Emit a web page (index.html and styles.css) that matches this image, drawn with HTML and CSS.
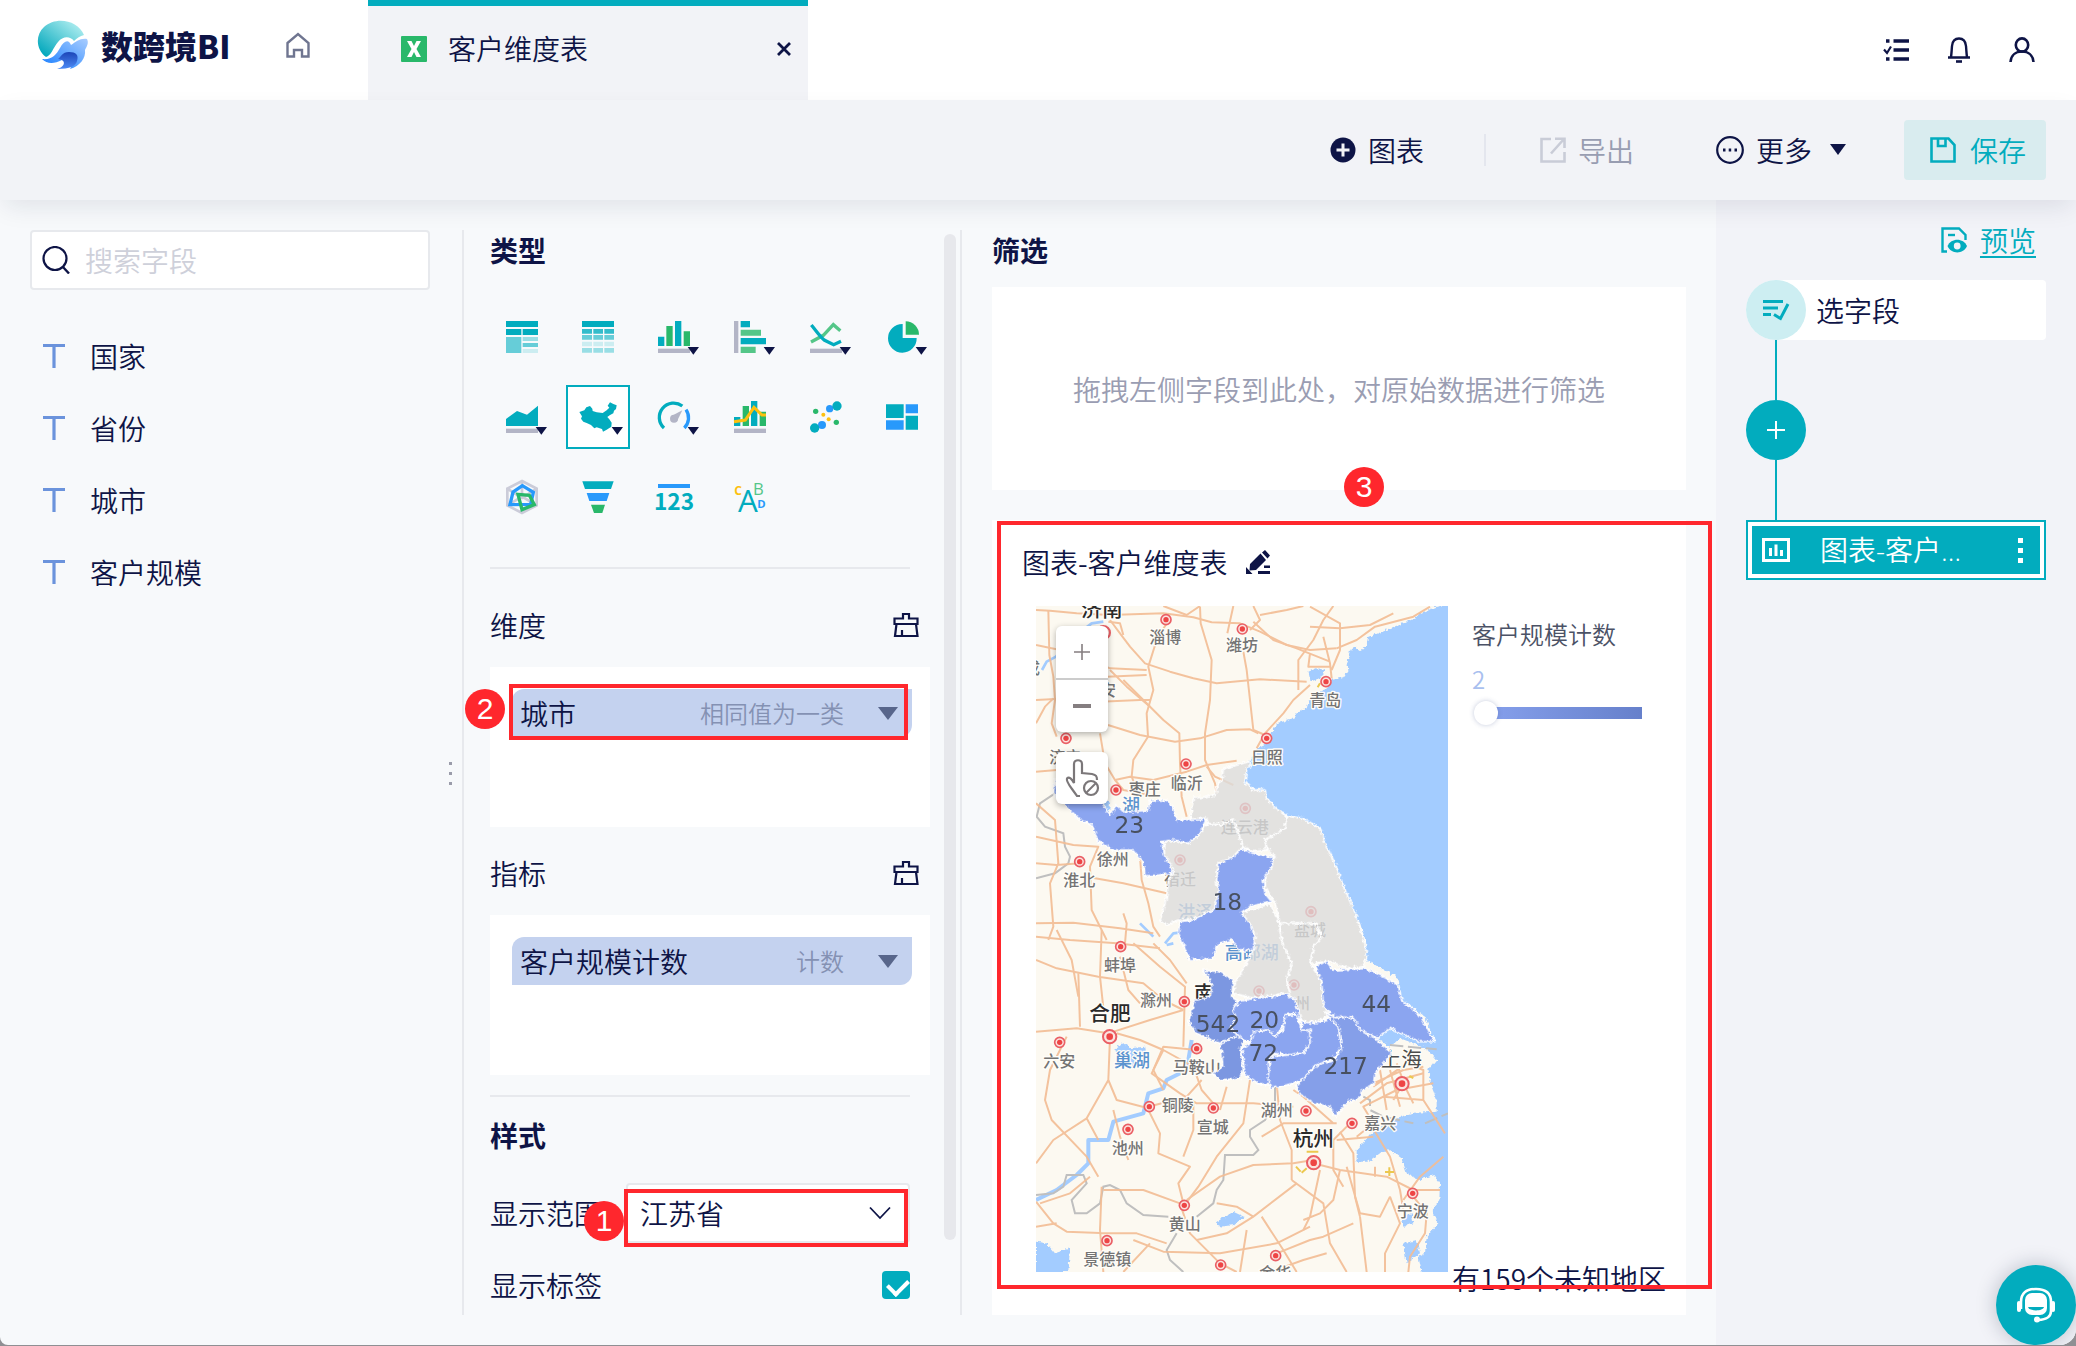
FILE: index.html
```html
<!DOCTYPE html>
<html lang="zh-CN">
<head>
<meta charset="utf-8">
<meta name="viewport" content="width=device-width, initial-scale=1">
<title>客户维度表 - 数跨境BI</title>
<link rel="stylesheet" href="styles.css">
</head>
<body>
<div class="app">
  <header class="topbar">
    <div class="brand">
      <svg class="logo" viewBox="37 20 52 50" aria-hidden="true">
        <defs>
          <linearGradient id="ball" x1="0" y1="1" x2="1" y2="0"><stop offset="0.1" stop-color="#05a9bd"/><stop offset="1" stop-color="#c4f6f6"/></linearGradient>
          <linearGradient id="wave" x1="0" y1="1" x2="1" y2="0"><stop offset="0.1" stop-color="#2384ff"/><stop offset="1" stop-color="#a9cdff"/></linearGradient>
          <linearGradient id="deep" x1="0" y1="0" x2="0" y2="1"><stop offset="0" stop-color="#1c45b8"/><stop offset="1" stop-color="#4d8bf5"/></linearGradient>
        </defs>
        <path d="M46 57C36 50 35 35 44 27C56 16 78 20 84 35C80 36 77 38 74 41C70 36 63 36 58 42C53 48 51 56 46 57Z" fill="url(#ball)"/>
        <path d="M42 59C52 60 56 55 60 48C64 40 69 39 71 45C76 42 80 38 87 39C89 43 87 46 85 50C86 58 80 66 70 69C75 62 70 56 62 60C54 64 47 64 42 59Z" fill="url(#wave)"/>
        <path d="M58 59C61 57 62 52 69 52C76 52 79 55 77 61C76 66 70 69 57 69C65 67 67 60 58 59Z" fill="url(#deep)"/>
      </svg>
      <span class="brand-name">数跨境BI</span>
      <a class="home" href="#" aria-label="首页"><svg viewBox="0 0 26 26"><path d="M2.500 11L13 2L23.500 11V24.500H17V18H9V24.500H2.500Z" fill="none" stroke="#6f7590" stroke-width="2.400"/></svg></a>
    </div>
    <div class="tab">
      <svg class="i26" viewBox="0 0 26 26" aria-hidden="true"><rect width="26" height="26" rx="1" fill="#29b86a"/><path d="M6 5H10.500L13 10L15.500 5H20L15.500 13L20 21H15.500L13 16L10.500 21H6L10.500 13Z" fill="#fff"/></svg>
      <span class="tab-title">客户维度表</span>
      <button class="plain tab-close" aria-label="关闭"><svg viewBox="0 0 16 16"><path d="M2 2L14 14M14 2L2 14" stroke="#0e1446" stroke-width="2.800"/></svg></button>
    </div>
    <nav class="top-actions">
      <button class="plain" aria-label="任务"><svg viewBox="0 0 26 26"><path d="M10.500 4H26M10.500 13H26M10.500 22H26" stroke="#0e1446" stroke-width="3.600"/><path d="M3 4H6.500M3 22H6.500" stroke="#0e1446" stroke-width="3.400"/><path d="M1 12.500L4 16L8 9.500" fill="none" stroke="#0e1446" stroke-width="2.200"/></svg></button>
      <button class="plain" aria-label="通知"><svg viewBox="0 0 26 26"><path d="M2 20.500H24M5 20C5.500 17 5.500 15 6 9C6.500 4 9.500 1.500 13 1.500S19.500 4 20 9C20.500 15 20.500 17 21 20" fill="none" stroke="#0e1446" stroke-width="2.400"/><path d="M10 24.500H16" stroke="#0e1446" stroke-width="2.600"/></svg></button>
      <button class="plain" aria-label="用户"><svg viewBox="0 0 26 26"><ellipse cx="13" cy="8" rx="6.200" ry="6.600" fill="none" stroke="#0e1446" stroke-width="2.600"/><path d="M1.500 25C2 18 7 14.500 13 14.500S24 18 24.500 25" fill="none" stroke="#0e1446" stroke-width="2.600"/></svg></button>
    </nav>
  </header>

  <div class="toolbar">
    <button class="plain tool"><svg class="i26" viewBox="0 0 26 26"><circle cx="13" cy="13" r="12.500" fill="#0e1446"/><path d="M13 6.500V19.500M6.500 13H19.500" stroke="#f2f3f7" stroke-width="3"/></svg>图表</button>
    <span class="tool-sep"></span>
    <button class="plain tool tool-off" disabled><svg class="i26" viewBox="0 0 26 26"><path d="M11 2H1.500V24.500H24.500V15M15 1.800H24.500V11M24 2L11 16.500" fill="none" stroke="#c9ccd7" stroke-width="2.600"/></svg>导出</button>
    <button class="plain tool tool-more"><svg class="i28" viewBox="0 0 28 28"><circle cx="14" cy="14" r="12.800" fill="none" stroke="#0e1446" stroke-width="2.200"/><path d="M7 14H9.500M12.700 14H15.200M18.500 14H21" stroke="#0e1446" stroke-width="2.800"/></svg>更多<svg class="caret" viewBox="0 0 16 12"><path d="M0 0H16L8 11Z" fill="#0e1446"/></svg></button>
    <button class="plain tool save"><svg class="i26" viewBox="0 0 26 26"><path d="M1.500 1.500H18.500L24.500 8V24.500H1.500Z" fill="none" stroke="#02acbe" stroke-width="2.600"/><path d="M8 2V9H15.500V2" fill="none" stroke="#02acbe" stroke-width="2.600"/></svg>保存</button>
  </div>

  <main class="main">
    <div class="workspace">
      <section class="fields">
        <label class="search">
          <svg class="i28" viewBox="0 0 28 28"><circle cx="13" cy="12.500" r="11.500" fill="none" stroke="#0e1446" stroke-width="2.200"/><path d="M20.500 20.500L27 27.500" stroke="#0e1446" stroke-width="2.400"/></svg>
          <input type="text" placeholder="搜索字段" aria-label="搜索字段">
        </label>
        <ul class="field-list">
          <li><svg class="type-t" viewBox="0 0 22 24"><path d="M0 1.500H22M11 1.500V24" stroke="#6b93dc" stroke-width="3.200"/></svg>国家</li>
          <li><svg class="type-t" viewBox="0 0 22 24"><path d="M0 1.500H22M11 1.500V24" stroke="#6b93dc" stroke-width="3.200"/></svg>省份</li>
          <li><svg class="type-t" viewBox="0 0 22 24"><path d="M0 1.500H22M11 1.500V24" stroke="#6b93dc" stroke-width="3.200"/></svg>城市</li>
          <li><svg class="type-t" viewBox="0 0 22 24"><path d="M0 1.500H22M11 1.500V24" stroke="#6b93dc" stroke-width="3.200"/></svg>客户规模</li>
        </ul>
        <span class="resizer"><i></i><i></i><i></i></span>
      </section>

      <section class="config">
        <div class="config-body">
          <h2>类型</h2>
          <div class="types">
            <button class="plain" aria-label="透视表"><svg viewBox="60 255 192 192"><path fill="#02acbe" d="M108 303h96v18h-96zM108 327h46v18h-46zM158 327h46v18h-46z"/><path fill="#66cdd8" d="M108 351h46v48h-46zM158 369h46v12h-46z"/><path fill="#99dee5" d="M158 351h46v12h-46z"/><path fill="#ccedf1" d="M158 387h46v12h-46z"/></svg></button>
            <button class="plain" aria-label="明细表"><svg viewBox="288 255 192 192"><path fill="#02acbe" d="M336 303h96v18h-96z"/><path fill="#33bccb" d="M336 327h30v14h-30zM370 327h29v14h-29zM403 327h29v14h-29z"/><path fill="#66cdd8" d="M336 345h30v14h-30zM370 345h29v14h-29zM403 345h29v14h-29z"/><path fill="#ccedf1" d="M336 365h30v14h-30zM370 365h29v14h-29zM403 365h29v14h-29z"/><path fill="#99dee5" d="M336 384h30v14h-30zM370 384h29v14h-29zM403 384h29v14h-29z"/></svg></button>
            <button class="plain" aria-label="柱状图"><svg viewBox="516 255 192 192"><path fill="#02acbe" d="M564 350h19v28h-19zM615 303h19v75h-19z"/><path fill="#29b86a" d="M589 318h19v60h-19zM641 334h19v44h-19z"/><path fill="#b3b5c6" d="M564 386h96v13h-96z"/><path class="drop" d="M653 381h34l-17 23z"/></svg></button>
            <button class="plain" aria-label="条形图"><svg viewBox="744 255 192 192"><path fill="#b3b5c6" d="M792 303h13v96h-13z"/><path fill="#02acbe" d="M812 303h28v19h-28zM812 354h76v19h-76z"/><path fill="#54c688" d="M812 329h61v18h-61zM812 380h45v19h-45z"/><path class="drop" d="M881 381h34l-17 23z"/></svg></button>
            <button class="plain" aria-label="折线图"><svg viewBox="972 255 192 192"><path d="M1023 366L1060 346L1090 314L1111 332" fill="none" stroke="#54c688" stroke-width="10"/><path d="M1024 315C1040 334 1050 350 1064 361L1091 374L1113 364" fill="none" stroke="#02acbe" stroke-width="10"/><path fill="#b3b5c6" d="M1020 386h96v13h-96z"/><path class="drop" d="M1109 381h34l-17 23z"/></svg></button>
            <button class="plain" aria-label="饼图"><svg viewBox="1200 255 192 192"><path d="M1298 312V354H1340A43 43 0 1 1 1298 312Z" fill="#02acbe"/><path d="M1307 304A40 40 0 0 1 1347 344H1307Z" fill="#29b86a"/><path class="drop" d="M1337 381h34l-17 23z"/></svg></button>
            <button class="plain" aria-label="面积图"><svg viewBox="60 495 192 192"><path d="M108 597L141 573L171 584L204 557V618H108Z" fill="#02acbe"/><path fill="#b3b5c6" d="M108 626h96v13h-96z"/><path class="drop" d="M197 621h34l-17 23z"/></svg></button>
            <button class="plain selected" aria-label="地图" aria-pressed="true"><svg viewBox="288 495 192 192"><path d="M328 576L343 571L349 562L360 558L367 566L368 573L380 577L398 579L410 571L418 563L413 557L420 547L430 552L440 556L438 567L432 572L430 580L419 586L412 591L418 598L425 608L424 620L410 629L399 635L396 627L380 622L373 625L363 615L350 609L340 605L333 596L336 589Z" fill="#02acbe"/><path class="drop" d="M425 621h34l-17 23z"/></svg></button>
            <button class="plain" aria-label="仪表盘"><svg viewBox="516 495 192 192"><path d="M582 624A43 43 0 0 1 637 558" fill="none" stroke="#02acbe" stroke-width="10"/><path d="M648 569A43 43 0 0 1 643 624" fill="none" stroke="#2899fb" stroke-width="10"/><circle cx="612" cy="596" r="12" fill="#b3b5c6"/><path d="M603 589L637 571L621 604Z" fill="#b3b5c6"/><path class="drop" d="M653 621h34l-17 23z"/></svg></button>
            <button class="plain" aria-label="组合图"><svg viewBox="744 495 192 192"><path fill="#02acbe" d="M792 591h19v27h-19zM843 543h19v75h-19z"/><path fill="#29b86a" d="M818 558h19v60h-19zM869 575h19v43h-19z"/><path d="M792 605L826 600L852 562L876 585H888" fill="none" stroke="#fdc00f" stroke-width="9"/><path fill="#b3b5c6" d="M792 626h96v13h-96z"/></svg></button>
            <button class="plain" aria-label="散点图"><svg viewBox="972 495 192 192"><g fill="#2899fb"><circle cx="1079" cy="566" r="11"/><circle cx="1056" cy="615" r="12"/></g><g fill="#02acbe"><circle cx="1101" cy="558" r="14"/><circle cx="1034" cy="624" r="14"/></g><g fill="#29b86a"><circle cx="1037" cy="574" r="8"/><circle cx="1099" cy="607" r="8"/></g><g fill="#fdc00f"><circle cx="1060" cy="584" r="6"/><circle cx="1076" cy="598" r="6"/></g></svg></button>
            <button class="plain" aria-label="矩形树图"><svg viewBox="1200 495 192 192"><path fill="#02acbe" d="M1248 553h53v41h-53zM1307 587h37v42h-37z"/><path fill="#2899fb" d="M1307 553h37v27h-37zM1248 601h53v28h-53z"/></svg></button>
            <button class="plain" aria-label="雷达图"><svg viewBox="60 735 192 192"><path d="M156 783L200 806V856L156 879L112 856V806ZM156 783V830M112 806L156 834L200 806M112 856L156 830L200 856" fill="none" stroke="#cbccd9" stroke-width="8"/><path d="M157 797L190 817L182 853L120 854L129 816Z" fill="none" stroke="#2899fb" stroke-width="10"/><path d="M144 823L178 826L193 854L156 869Z" fill="none" stroke="#29b86a" stroke-width="10"/></svg></button>
            <button class="plain" aria-label="漏斗图"><svg viewBox="288 735 192 192"><path d="M337 784H431L423 807H345Z" fill="#02acbe"/><path d="M350 819H418L410 843H358Z" fill="#2899fb"/><path d="M363 854H405L397 879H372Z" fill="#29b86a"/></svg></button>
            <button class="plain" aria-label="指标卡"><svg viewBox="516 735 192 192"><path fill="#2899fb" d="M564 792h96v12h-96z"/><text class="g-num" x="612" y="869">123</text></svg></button>
            <button class="plain" aria-label="词云"><svg viewBox="744 735 192 192"><text class="g-a" x="804" y="877">A</text><text class="g-b" x="849" y="825">B</text><text class="g-c" x="793" y="825">C</text><text class="g-d" x="862" y="863">D</text></svg></button>
          </div>
          <hr>
          <div class="row-head dim"><h3>维度</h3><button class="plain" aria-label="清空维度"><svg viewBox="0 0 26 26"><path d="M10 6.500V2H16V6.500H24.500V12H1.500V6.500ZM3.500 12L2 24H24.500L23 12M9 24V18" fill="none" stroke="#0e1446" stroke-width="2.200"/></svg></button></div>
          <div class="dropzone">
            <div class="chip-wrap">
              <button class="plain chip"><span class="chip-name">城市</span><span class="chip-agg">相同值为一类</span><svg class="chip-caret" viewBox="0 0 20 13"><path d="M0 0H20L10 13Z" fill="#58668b"/></svg></button>
              <span class="mark mark-chip"></span><span class="badge badge-2">2</span>
            </div>
          </div>
          <div class="row-head"><h3>指标</h3><button class="plain" aria-label="清空指标"><svg viewBox="0 0 26 26"><path d="M10 6.500V2H16V6.500H24.500V12H1.500V6.500ZM3.500 12L2 24H24.500L23 12M9 24V18" fill="none" stroke="#0e1446" stroke-width="2.200"/></svg></button></div>
          <div class="dropzone">
            <button class="plain chip"><span class="chip-name">客户规模计数</span><span class="chip-agg">计数</span><svg class="chip-caret" viewBox="0 0 20 13"><path d="M0 0H20L10 13Z" fill="#58668b"/></svg></button>
          </div>
          <hr class="hr-style">
          <h2 class="style-head">样式</h2>
          <div class="opt">
            <label for="scope">显示范围</label>
            <div class="select-wrap">
              <select id="scope"><option>江苏省</option></select>
              <svg viewBox="0 0 22 14"><path d="M1 1.500L11 12L21 1.500" fill="none" stroke="#0e1446" stroke-width="1.800"/></svg>
              <span class="mark mark-select"></span><span class="badge badge-1">1</span>
            </div>
          </div>
          <div class="opt opt-label">
            <label for="showlabel">显示标签</label>
            <input type="checkbox" id="showlabel" checked>
          </div>
        </div>
        <div class="scrollbar"></div>
      </section>

      <section class="result">
        <h2>筛选</h2>
        <div class="filter-zone">拖拽左侧字段到此处，对原始数据进行筛选</div>
        <article class="chart">
          <span class="mark mark-chart"></span><span class="badge badge-3">3</span>
          <header class="chart-head"><h3>图表-客户维度表</h3><button class="plain" aria-label="重命名"><svg viewBox="0 0 24 24"><path d="M4 14L14.500 3.500L20 10L10 20L3.500 20.500ZM16 2.500L19 0L24 5.500L21.500 8.500Z" fill="#0e1446"/><path d="M0 24V17L6.500 24ZM12 21H24V24H12ZM18 15.500H24V18H18Z" fill="#0e1446"/></svg></button></header>
          <div class="chart-body">
            <div class="map">
              <svg class="map-svg" viewBox="48 48 1236 1998" role="img" aria-label="江苏省地图">
                <defs>
                  <filter id="coast" x="-5%" y="-5%" width="110%" height="110%"><feTurbulence type="fractalNoise" baseFrequency="0.100" numOctaves="2" seed="4"/><feDisplacementMap in="SourceGraphic" scale="16" xChannelSelector="R" yChannelSelector="G"/></filter>
                  <g id="pin"><circle r="15" fill="#fbe3df" stroke="#ea5f65" stroke-width="5"/><circle r="8" fill="#ee4545"/></g>
                  <g id="pinbig"><circle r="20" fill="#fbe3df" stroke="#ea5f65" stroke-width="6"/><circle r="10" fill="#ee4545"/></g>
                </defs>
                <rect x="48" y="48" width="1236" height="1998" fill="#fcf9f1"/>
                <g filter="url(#coast)">
                  <path class="sea" d="M1310 38L1250 50L1200 70L1185 85L1150 100L1110 115L1075 130L1045 140L1040 165L1020 185L1010 170L990 180L982 215L985 240L970 262L935 270L918 295L868 330L860 355L830 370L820 385L800 390L770 400L755 430L745 460L715 475L690 510L680 540L675 575L700 600L735 600L740 625L770 655L800 675L850 685L900 715L920 770L945 820L975 900L1000 970L1020 1000L1035 1050L1040 1110L1060 1120L1135 1165L1145 1230L1215 1280L1247 1355L1150 1320L1110 1310L1070 1345L1110 1370L1140 1345L1180 1360L1225 1380L1250 1410L1225 1440L1235 1490L1250 1530L1250 1565L1180 1568L1110 1590L1050 1635L1010 1680L1010 1715L1045 1715L1080 1690L1110 1680L1145 1705L1160 1750L1200 1770L1240 1755L1260 1780L1258 1830L1235 1860L1255 1900L1220 1940L1215 1990L1195 2000L1210 2066H1310Z"/>
                  <path class="sea" d="M865 245L890 235L915 240L905 262L872 275ZM285 1375L310 1360L330 1375L375 1370L385 1430L300 1430ZM48 1955L80 1960L105 1990L150 1975L145 2046H48ZM590 1895L640 1865L672 1880L640 1905L600 1910ZM250 630L270 640L265 680L250 660ZM1140 1880L1175 1870L1180 1900L1150 1910ZM1150 1960L1190 1950L1200 1990L1160 2020Z"/>
                </g>
                <g class="river">
                  <path d="M66 240L80 215L108 200L150 150L215 100L250 95"/>
                  <path d="M48 1830L110 1800L170 1755L205 1720L205 1650L265 1650L280 1595L370 1570L385 1510L430 1495L440 1470L500 1440L515 1350" stroke-width="12"/>
                  <path d="M435 1060L460 1030L500 1025M460 1060L440 1065M360 1000L400 1040"/>
                </g>
                <g class="border">
                  <path d="M105 610L60 640L50 680L75 710L130 730L135 770L150 800L145 820L105 850L48 865"/>
                  <path d="M48 1815L100 1810L130 1790L140 1755L190 1755L200 1780L155 1830L165 1870L200 1870L240 1840L250 1790L270 1785L300 1800L320 1840L370 1875L445 1880M530 1880L580 1840L590 1800L610 1770L615 1695L700 1695L715 1680L690 1640L690 1620L735 1590L765 1540L765 1480M470 1930L440 1980L450 2010L490 2046"/>
                  <path d="M1030 1520L1050 1530L1050 1560L1090 1580L1180 1600M1215 1600L1284 1570M1110 1365L1250 1378" stroke-dasharray="40 14"/>
                </g>
                <g class="road">
                  <path d="M48 60L90 62L170 70L270 75L430 70L520 82L575 97L660 100L720 125L800 165L870 180L950 175"/>
                  <path d="M85 60L88 195L100 260L105 330L95 400L110 440"/>
                  <path d="M48 165L120 180L190 200L270 235L380 240M270 90L300 130L330 170L375 220L450 245L520 265L590 280L720 268L860 275"/>
                  <path d="M265 95L300 100L310 135M440 100L410 150L385 230L400 300L380 370L384 440L340 510L335 560L355 610"/>
                  <path d="M540 50L542 100L575 210L570 330L555 430L555 510L585 580L590 610"/>
                  <path d="M430 48L500 75L540 48M640 48L622 130M700 48L720 90L690 120M670 185L680 240L690 330L700 420L735 435"/>
                  <path d="M720 75L800 60L850 48M700 95L760 150L830 175L930 215M870 50L960 100L960 180L935 240M835 300L835 210L880 150L910 90L940 48M910 140L930 220L935 265M870 190L865 230L930 230"/>
                  <path d="M950 175L1010 150L1065 110L1180 80L1230 50M870 110L960 115L1050 105L1120 70"/>
                  <path d="M870 285L820 330L790 370L735 430L710 475M48 330L150 325L240 335L360 330L390 330M310 270L370 330L430 390L478 430L480 520L485 620L500 680"/>
                  <path d="M264 405L360 435L465 455L540 445L620 420L690 418L715 430M240 430L255 520L285 570L310 600L390 615"/>
                  <path d="M270 240L320 290L390 350M260 260L380 255M48 400L75 350L100 325M48 545L110 540M285 570L330 560L400 570L500 545L560 525L650 512"/>
                  <path d="M560 530L585 560L640 585"/>
                  <path d="M48 640L105 690L115 820L90 880L100 1010L85 1050M48 740L160 765L235 770L210 830L215 960L260 1050M48 820L110 825L180 820M200 860L310 880L440 910M360 800L365 870L385 940L400 1010L420 1040"/>
                  <path d="M48 1000L160 998L300 1015L400 1030M310 970L320 1000L315 1060"/>
                  <path d="M48 1040L150 1050L290 1060L420 1075M48 1110L110 1135L235 1160L370 1180L430 1230L490 1260M110 1020L155 1110L175 1220M245 1020L240 1160L255 1300M300 1100L325 1200L360 1240"/>
                  <path d="M340 1060L420 1130L495 1190L490 1370M400 1060L450 1110L500 1180"/>
                  <path d="M48 1325L170 1315L265 1330L390 1290L490 1260M175 1150L180 1310M140 1340L90 1440L75 1530L95 1590L200 1700L235 1760"/>
                  <path d="M270 1340L265 1470L290 1530L385 1555M265 1470L200 1585L100 1650L48 1720M200 1585L235 1650"/>
                  <path d="M290 1330L360 1350L430 1380L520 1430L545 1500L580 1540M430 1380L395 1450L480 1510L530 1540L700 1540L820 1550"/>
                  <path d="M530 1380L430 1370L400 1440L430 1500M545 1470L500 1520L385 1550M620 1490L600 1560M690 1470L670 1600L590 1700L535 1790L490 1850"/>
                  <path d="M385 1560L420 1630L415 1690L510 1730L475 1780L490 1840M520 1540L520 1620L490 1700M280 1560L300 1640L325 1710"/>
                  <path d="M48 1835L100 1900L140 1925L260 1930L350 1930L440 1960M245 1790L240 1920L250 2046M250 1800L370 1800L480 1840L510 1930L600 2020L650 2046M340 1950L430 1985L600 1990L770 1960L870 1910"/>
                  <path d="M48 1910L110 1900M60 1840L150 1810L210 1760M310 2046L390 1960M590 1840L650 1850L700 1880L830 1780M500 1830L600 1760L700 1725L820 1720L880 1710M680 1920L660 2046M700 1880L620 1930L530 1950"/>
                  <path d="M770 1480L780 1590L815 1680L815 1770M820 1500L850 1520L940 1600M725 1640L790 1600L950 1600M990 1600L940 1650L940 1740L970 1790"/>
                  <path d="M960 1625L1000 1690L1005 1820L1020 1880M950 1650L1060 1640M1010 1640L1060 1600L1030 1550L1130 1500L1240 1480M1020 1540L1100 1480L1210 1450M1080 1440L1100 1560M1110 1440L1140 1550M1050 1600L1110 1700L1140 1800L1150 1860"/>
                  <path d="M1060 1480L1150 1440L1210 1430M1090 1520L1210 1530L1210 1440L1160 1420L1060 1490M1150 1480L1120 1530M1130 1420L1160 1500L1180 1540M1210 1530L1275 1630"/>
                  <path d="M880 1720L960 1740L1100 1760L1180 1800L1260 1800M900 1740L870 1880L850 1920M815 1770L910 1840L930 1960L980 2046M960 1740L940 1830L900 1870L850 1890M1065 1730L1065 1760M980 1730L1020 1870L1080 1880L1110 1820M920 1990L850 2010L750 2046"/>
                  <path d="M770 1990L870 1950L910 1940L1000 1900M725 1880L790 1980L830 2046M1110 1820L1140 1900L1095 1990L1095 2046M1180 1820L1220 1870L1215 1930L1170 2000L1165 2046M1150 1830L1200 1760L1270 1700M1020 1880L1040 2046"/>
                </g>
                <g class="city">
                  <text x="388" y="159">淄博</text><text x="618" y="184">潍坊</text><text x="868" y="349">青岛</text><text x="692" y="518">日照</text><text x="12" y="252">成</text><text x="240" y="317">安</text><text x="88" y="520">济宁</text>
                  <text x="326" y="614">枣庄</text><text x="452" y="596">临沂</text><text x="230" y="824">徐州</text><text x="130" y="888">淮北</text><text x="432" y="885">宿迁</text>
                  <text x="252" y="1144">蚌埠</text><text x="360" y="1249">滁州</text><text x="70" y="1431">六安</text><text x="458" y="1450">马鞍山</text><text x="425" y="1564">铜陵</text><text x="530" y="1628">宣城</text><text x="275" y="1692">池州</text><text x="722" y="1577">湖州</text><text x="1033" y="1616">嘉兴</text><text x="446" y="1919">黄山</text><text x="1130" y="1882">宁波</text><text x="190" y="2025">景德镇</text><text x="718" y="2066">金华</text>
                </g>
                <g class="lake"><text x="306" y="666">湖</text><text x="472" y="988">洪泽</text><text x="614" y="1106">高邮湖</text><text x="282" y="1431">巢湖</text></g>
                <g class="capital"><text x="184" y="80">济南</text><text x="522" y="1232">南</text><text x="208" y="1294">合肥</text><text x="818" y="1668">杭州</text><text class="soft" x="1082" y="1431">上海</text></g>
                <g class="airport"><path d="M828 1730L842 1745M860 1685H895M845 1748L860 1735M1095 1746H1122M1108 1732V1758M1168 1458L1180 1464M893 292L900 280"/></g>
                <use href="#pin" x="438" y="89"/><use href="#pin" x="667" y="117"/><use href="#pin" x="918" y="275"/><use href="#pin" x="740" y="445"/><use href="#pin" x="138" y="445"/><use href="#pin" x="498" y="522"/><use href="#pin" x="288" y="600"/><use href="#pin" x="179" y="815"/><use href="#pin" x="480" y="810"/><use href="#pin" x="676" y="655"/><use href="#pin" x="873" y="965"/><use href="#pinbig" x="250" y="128"/>
                <use href="#pin" x="302" y="1070"/><use href="#pin" x="493" y="1235"/><use href="#pinbig" x="269" y="1340"/><use href="#pin" x="119" y="1357"/><use href="#pin" x="530" y="1376"/><use href="#pin" x="388" y="1550"/><use href="#pin" x="580" y="1554"/><use href="#pin" x="324" y="1618"/><use href="#pin" x="858" y="1563"/><use href="#pin" x="996" y="1600"/><use href="#pinbig" x="881" y="1718"/><use href="#pinbig" x="1146" y="1481"/><use href="#pin" x="493" y="1846"/><use href="#pin" x="1178" y="1810"/><use href="#pin" x="261" y="1952"/><use href="#pin" x="602" y="2025"/><use href="#pin" x="767" y="1997"/><use href="#pin" x="717" y="1203"/><use href="#pin" x="822" y="1185"/>
                <g class="city"><text x="602" y="730">连云港</text><text x="822" y="1039">盐城</text><text x="822" y="1258">州</text></g>
                <g class="regions" filter="url(#coast)">
                  <path class="empty" d="M685 515L650 525L610 535L605 570L590 590L585 615L555 620L520 625L510 690L560 685L565 705L595 705L640 690L655 730L668 770L700 785L740 780L735 750L795 715L800 675L770 655L740 625L735 600L700 600L675 575L680 540L695 520Z"/>
                  <path class="empty" d="M430 755L460 750L505 760L540 730L562 700L600 705L640 690L655 730L668 770L630 810L595 820L590 880L600 900L585 955L520 990L475 990L440 1005L420 990L440 920L445 870L460 850L435 810Z"/>
                  <path class="empty" d="M800 678L850 685L900 715L920 770L945 820L975 900L1010 980L1035 1060L1040 1100L1030 1130L990 1135L930 1115L870 1120L880 1070L905 1040L890 1000L830 1000L780 1000L765 940L735 890L735 840L765 800L740 775L735 750L795 715Z"/>
                  <path class="empty" d="M665 970L750 940L775 990L785 1050L815 1120L800 1170L815 1230L790 1210L770 1215L700 1225L640 1210L645 1180L680 1120L700 1080L705 1030Z"/>
                  <path class="empty" d="M780 1000L880 1000L905 1040L880 1070L870 1120L900 1160L915 1230L950 1265L880 1300L840 1290L815 1230L800 1170L815 1120L785 1050Z"/>
                  <path class="b1" d="M105 570L100 610L140 650L180 690L215 705L235 755L280 780L340 780L370 820L375 858L420 855L460 850L450 820L435 800L425 755L460 750L505 760L540 730L560 685L470 690L460 650L440 630L390 630L385 660L340 665L310 665L290 645L270 675L250 645L240 620Z"/>
                  <path class="b1" d="M665 775L700 790L760 800L755 830L730 870L735 910L755 935L690 950L665 970L690 1000L705 1040L700 1080L660 1080L635 1050L590 1065L580 1105L510 1110L475 1030L480 995L520 990L585 955L595 900L590 870L595 820L640 800Z"/>
                  <g transform="translate(0 1020)">
                    <path class="b3" d="M545 120L600 125L640 150L635 200L655 215L638 240L650 265L630 295L655 315L600 340L530 310L505 275L525 210L570 200L575 170L565 140Z"/>
                    <path class="b3" d="M600 340L655 315L672 330L662 355L670 420L660 445L600 450L575 430L608 410L605 370Z"/>
                    <path class="b1" d="M655 215L700 205L760 200L795 190L825 210L845 275L820 250L795 255L790 290L765 320L740 300L700 305L690 340L665 325L630 295L650 265L638 240Z"/>
                    <path class="b1" d="M690 340L700 305L745 300L765 320L790 300L795 255L830 255L845 300L870 300L870 340L850 370L800 375L755 370L745 400L750 465L710 460L675 435L665 355Z"/>
                    <path class="b1" d="M845 275L880 280L930 265L955 290L965 350L940 385L880 410L865 430L855 450L800 465L755 475L745 440L750 380L800 375L850 370L870 340L870 300L845 300Z"/>
                    <path class="b2" d="M915 245L945 262L1000 262L1025 300L1065 325L1115 370L1090 400L1065 430L1060 465L1025 480L1020 505L985 515L945 560L930 530L880 520L835 490L830 465L865 430L890 405L945 390L965 350L955 290L930 265Z"/>
                    <path class="b1" d="M885 105L920 95L940 120L1040 115L1100 145L1135 165L1145 210L1200 255L1245 335L1200 335L1130 305L1110 295L1070 325L1020 300L1000 262L945 262L910 230L905 160Z"/>
                  </g>
                </g>
                <g class="value"><text x="328" y="729">23</text><text x="622" y="959">18</text><text x="594" y="1325">542</text><text x="733" y="1313">20</text><text x="730" y="1412">72</text><text x="977" y="1451">217</text><text x="1069" y="1265">44</text></g>
              </svg>
              <div class="map-tools">
                <div class="zoom">
                  <button class="plain" aria-label="放大"><svg viewBox="0 0 18 18"><path d="M9 1V17M1 9H17" stroke="#857e80" stroke-width="1.600"/></svg></button>
                  <button class="plain" aria-label="缩小"><svg viewBox="0 0 18 18"><path d="M0 9H18" stroke="#857e80" stroke-width="4"/></svg></button>
                </div>
                <button class="plain lock" aria-label="禁止拖动"><svg viewBox="0 0 36 40"><path d="M16 38H13L8 31C5 27 2 23 3 20.500C5 18 8 21 10 25V6C10 1 18 1 18 6V15L28 16C32 17 33 18 33 22" fill="none" stroke="#7b7779" stroke-width="2.200"/><circle cx="27" cy="30" r="7" fill="none" stroke="#7b7779" stroke-width="2.200"/><path d="M22 35L32 25" stroke="#7b7779" stroke-width="2"/></svg></button>
              </div>
            </div>
            <div class="legend">
              <label for="range">客户规模计数</label>
              <output for="range">2</output>
              <input type="range" id="range" min="2" max="542" value="2">
              <p class="unknown">有159个未知地区</p>
            </div>
          </div>
        </article>
      </section>
    </div>

    <aside class="flow">
      <div class="preview"><svg class="i26" viewBox="0 0 26 26"><path d="M6 24.500H1.500V1.500H18L24.500 8V13" fill="none" stroke="#02acbe" stroke-width="2.400"/><path d="M7 8H14" stroke="#02acbe" stroke-width="2.400"/><path d="M6.500 19C10 10.500 22.500 10.500 26 19C22.500 27.500 10 27.500 6.500 19Z" fill="#02acbe"/><circle cx="16.200" cy="19" r="3.400" fill="#f2f3f7"/></svg><a href="#">预览</a></div>
      <button class="plain step"><span class="disc"><svg class="i28" viewBox="0 0 28 22"><path d="M1 2.500H21M1 9H16M1 15.500H9" stroke="#02acbe" stroke-width="3"/><path d="M12 15.500L18.500 19.500L26 5" fill="none" stroke="#02acbe" stroke-width="3"/></svg></span>选字段</button>
      <span class="link"></span>
      <button class="plain disc add" aria-label="添加步骤"><svg viewBox="0 0 18 18"><path d="M9 0V18M0 9H18" stroke="#fff" stroke-width="2"/></svg></button>
      <span class="link"></span>
      <div class="node"><button class="plain node-main"><svg viewBox="0 0 28 24"><rect x="1.500" y="1.500" width="25" height="21" fill="none" stroke="#fff" stroke-width="3"/><path d="M8.500 10V18M14 6.500V18M19.500 12V18" stroke="#fff" stroke-width="3"/></svg><span lang="en">图表-客户…</span></button><button class="plain dots" aria-label="更多操作"><i></i><i></i><i></i></button></div>
      <button class="plain helper" aria-label="客服"><svg viewBox="0 0 40 36"><path d="M5 22V15C5 6 10 2 20 2S35 6 35 15V24C35 30 31 32.500 22 33" fill="none" stroke="#fff" stroke-width="2.600"/><rect x="9" y="6" width="22" height="22" rx="7" fill="#fff"/><path d="M12 20H28C27 24.500 13 24.500 12 20Z" fill="#02acbe"/><rect x="1" y="14" width="4" height="11" rx="2" fill="#fff"/><rect x="35" y="14" width="4" height="11" rx="2" fill="#fff"/><circle cx="21" cy="32.500" r="3" fill="#fff"/></svg></button>
    </aside>
  </main>
</div>
</body>
</html>
```
FILE: styles.css
```css
* { box-sizing: border-box; }

:root {
  --ink: #0e1446;
  --teal: #02acbe;
  --line: #e7e9ed;
  --red: #ff272d;
}

body {
  margin: 0;
  padding-bottom: 1px;
  background: #8f8f93;
  color: var(--ink);
  font: 350 28px/40px "Noto Sans CJK SC", sans-serif;
}

h2, h3, p, ul { margin: 0; padding: 0; font-size: 28px; line-height: 40px; }
h2 { font-weight: 700; }
h3 { font-weight: 350; }
svg { display: block; flex: none; }

.plain {
  margin: 0;
  padding: 0;
  border: 0;
  background: none;
  color: inherit;
  font: inherit;
  display: flex;
  align-items: center;
  justify-content: center;
}

.i26 { width: 26px; height: 26px; }
.i28 { width: 28px; height: 28px; }

.app {
  min-height: calc(100vh - 1px);
  display: flex;
  flex-direction: column;
  background: #f7f9fb;
  border-radius: 0 0 16px 8px;
  overflow: hidden;
}

/* top bar */
.topbar { display: flex; height: 100px; background: #fff; }
.brand { width: 368px; padding: 0 57px 10px 37px; display: flex; align-items: center; }
.logo { width: 52px; height: 50px; }
.brand-name { margin-left: 12px; font-size: 32px; font-weight: 900; white-space: nowrap; }
.home { margin-left: auto; }
.home svg { width: 26px; height: 26px; }
.tab { width: 440px; padding: 0 16px 8px 33px; border-top: 6px solid var(--teal); background: #f2f3f7; display: flex; align-items: center; }
.tab-title { margin-left: 21px; line-height: 36px; padding-bottom: 2px; }
.tab-close { margin-left: auto; }
.tab-close svg { width: 16px; height: 16px; }
.top-actions { margin-left: auto; padding-right: 41px; display: flex; align-items: center; gap: 37px; }
.top-actions svg { width: 26px; height: 26px; }

/* toolbar */
.toolbar { position: relative; z-index: 1; height: 100px; padding-right: 30px; display: flex; align-items: center; justify-content: flex-end; background: #f2f3f7; box-shadow: 0 10px 24px -4px rgba(20, 26, 60, .1); }
.tool { gap: 12px; }
.tool-sep { width: 2px; height: 32px; margin: 0 54px 0 60px; background: #e4e6ee; }
.tool-off { color: #989db1; }
.tool-more { margin: 0 58px 0 82px; }
.caret { width: 16px; height: 12px; margin-left: 6px; }
.save { width: 142px; height: 60px; padding-left: 6px; border-radius: 4px; background: #d9ecef; color: var(--teal); gap: 14px; }

.main { flex: 1; display: flex; }
.workspace { flex: 1; min-width: 0; padding: 30px; display: flex; }

/* field list */
.fields { position: relative; width: 434px; flex: none; padding-right: 32px; border-right: 2px solid var(--line); }
.search { height: 60px; padding: 0 10px; display: flex; align-items: center; gap: 15px; border: 2px solid var(--line); border-radius: 4px; background: #fff; }
.search input { flex: 1; min-width: 0; border: 0; outline: 0; padding: 0; background: none; font: inherit; color: inherit; }
.search input::placeholder { color: #ced0da; opacity: 1; }
.field-list { margin-top: 30px; list-style: none; }
.field-list li { height: 72px; padding-left: 13px; display: flex; align-items: center; gap: 25px; }
.type-t { width: 22px; height: 24px; }
.resizer { position: absolute; right: 10px; top: 532px; display: grid; gap: 7px; }
.resizer i { width: 3px; height: 3px; background: #9a9caa; }

/* chart settings */
.config { width: 498px; flex: none; padding: 0 4px 0 26px; border-right: 2px solid var(--line); display: flex; gap: 14px; }
.config-body { width: 440px; }
.scrollbar { width: 12px; height: 1006px; margin-top: 4px; border-radius: 6px; background: #e7e8ec; }
.types { margin-top: 35px; display: grid; grid-template-columns: repeat(6, 64px); gap: 16px 12px; }
.types button { width: 64px; height: 64px; }
.types svg { width: 64px; height: 64px; }
.types .selected { background: #fff; outline: 2px solid var(--teal); outline-offset: -2px; }
.drop { fill: var(--ink); }
.types text { font-family: "Open Sans", sans-serif; font-weight: 700; }
.types .g-num { font-family: "Noto Sans CJK SC", sans-serif; font-size: 68px; font-weight: 700; fill: #02acbe; text-anchor: middle; }
.types .g-a { font-size: 94px; font-weight: 500; fill: #02acbe; }
.types .g-b { font-size: 50px; font-weight: 500; fill: #54c688; }
.types .g-c { font-size: 36px; fill: #fdc00f; }
.types .g-d { font-size: 34px; fill: #2899fb; }
hr { width: 420px; height: 2px; margin: 38px 0 0; border: 0; background: var(--line); }
.hr-style { margin-top: 20px; }
.row-head { margin: 26px 0 22px; padding-right: 11px; height: 40px; display: flex; align-items: center; justify-content: space-between; }
.row-head.dim { margin-top: 36px; }
.row-head svg { width: 26px; height: 26px; }
.dropzone { height: 160px; padding: 22px 18px 0 22px; background: #fff; }
.chip-wrap { position: relative; }
.chip { width: 400px; height: 48px; padding: 0 14px 0 8px; border-radius: 12px 0 12px 0; background: #c4d2ef; }
.chip-agg { margin-left: auto; font-size: 24px; color: #8491b3; }
.chip-caret { width: 20px; height: 13px; margin-left: 34px; }
.style-head { margin-top: 18px; }
.opt { position: relative; margin-top: 28px; height: 60px; width: 420px; display: flex; align-items: center; justify-content: space-between; }
.opt-label { margin-top: 12px; }
.select-wrap { position: relative; width: 284px; }
.select-wrap select { width: 100%; height: 60px; padding: 0 48px 0 12px; appearance: none; border: 2px solid var(--line); border-radius: 4px; background: #fff; color: inherit; font: inherit; }
.select-wrap svg { position: absolute; right: 19px; top: 23px; width: 22px; height: 14px; pointer-events: none; }
.opt input { position: relative; width: 28px; height: 28px; margin: 0; appearance: none; border-radius: 4px; background: var(--teal); }
.opt input:checked::after { content: ""; position: absolute; left: 9px; top: 4px; width: 10px; height: 16px; border: solid #fff; border-width: 0 4px 4px 0; transform: rotate(45deg); }

/* callouts over the controls */
.mark { position: absolute; border: 4px solid var(--red); pointer-events: none; }
.mark-chip { inset: -5px 4px -3px -3px; }
.mark-select { inset: 6px 2px -4px -2px; }
.mark-chart { inset: 1px -26px 26px 5px; }
.badge { position: absolute; width: 40px; height: 40px; border-radius: 50%; background: var(--red); color: #fff; font: 400 30px/40px "Liberation Sans", sans-serif; text-align: center; }
.badge-1 { left: -42px; top: 18px; }
.badge-2 { left: -47px; top: 0; }
.badge-3 { left: 352px; top: -53px; }

/* result */
.result { flex: 1; min-width: 0; padding-left: 30px; display: flex; flex-direction: column; }
.filter-zone { margin: 17px 0 30px; height: 203px; display: flex; align-items: center; justify-content: center; background: #fff; color: #9a9db2; }
.chart { position: relative; flex: 1; background: #fff; }
.chart-head { padding: 22px 0 0 30px; display: flex; align-items: center; gap: 18px; }
.chart-head svg { width: 24px; height: 24px; }
.chart-body { margin-top: 24px; padding-left: 44px; display: flex; }
.map { position: relative; width: 412px; flex: none; }
.map-svg { width: 412px; height: 666px; }
.map-tools { position: absolute; left: 20px; top: 20px; }
.zoom, .lock { border-radius: 6px; background: #fff; box-shadow: 0 2px 6px rgba(0, 0, 0, .3); }
.zoom button { width: 52px; height: 52px; }
.zoom button + button { height: 54px; border-top: 2px solid #ccc; }
.zoom svg { width: 18px; height: 18px; }
.map-tools .lock { width: 52px; height: 52px; margin-top: 20px; }
.lock svg { width: 36px; height: 40px; }
.legend { flex: 1; padding: 10px 0 0 24px; display: flex; flex-direction: column; align-items: flex-start; color: #4b5266; font-size: 24px; line-height: 36px; }
.legend output { margin-top: 9px; color: #a9c0ef; }
.legend input { width: 168px; height: 24px; margin: 4px 0 0 2px; appearance: none; background: linear-gradient(90deg, #86a0ec, #6680cb) right center / 156px 12px no-repeat; }
.legend input::-webkit-slider-thumb { appearance: none; width: 24px; height: 24px; border-radius: 50%; background: #fff; box-shadow: 0 0 5px rgba(60, 80, 140, .3); }
.unknown { margin: 533px 0 -34px -20px; color: var(--ink); white-space: nowrap; }

/* map layers */
.sea { fill: #a3ccff; }
.road { fill: none; stroke: #f3bd94; stroke-width: 6; stroke-linejoin: round; opacity: .9; }
.river { fill: none; stroke: #a3ccff; stroke-width: 8; stroke-linejoin: round; }
.border { fill: none; stroke: #bfbfbf; stroke-width: 6; }
.airport { fill: none; stroke: #ecc84f; stroke-width: 6; }
.city, .lake, .capital { paint-order: stroke; stroke: #fffdf8; stroke-width: 8px; stroke-linejoin: round; font-size: 48px; font-weight: 500; fill: #747474; }
.lake { fill: #5b93cf; font-size: 54px; }
.capital { fill: #2a2a2a; font-size: 62px; font-weight: 500; }
.capital .soft { fill: #4c4c4c; font-weight: 400; }
.regions path { stroke: #fff; stroke-width: 5; stroke-linejoin: round; }
.regions .empty { fill: #dcdcdc; fill-opacity: .8; }
.b1 { fill: #8ba5f0; }
.b2 { fill: #859fe9; }
.b3 { fill: #7c97e1; }
.value { font-family: "DejaVu Sans", sans-serif; font-size: 70px; font-weight: 400; fill: #485060; text-anchor: middle; }

/* flow */
.flow { position: relative; width: 360px; flex: none; padding: 20px 30px 0; background: #f2f3f8; display: flex; flex-direction: column; }
.preview { margin-bottom: 20px; padding-right: 10px; display: flex; align-items: center; justify-content: flex-end; gap: 13px; }
.preview a { color: var(--teal); text-decoration: underline; text-decoration-thickness: 2px; text-underline-offset: 4px; }
.step { justify-content: flex-start; gap: 10px; height: 60px; border-radius: 30px 4px 4px 30px; background: #fff; }
.disc { width: 60px; height: 60px; border-radius: 50%; background: #cdeef2; display: flex; align-items: center; justify-content: center; }
.disc.add { background: var(--teal); }
.add svg { width: 18px; height: 18px; }
.step svg { height: 22px; }
.link { width: 2px; height: 60px; margin-left: 29px; background: var(--teal); }
.node { height: 60px; padding: 0 14px 0 10px; display: flex; align-items: center; justify-content: space-between; border: 2px solid var(--teal); background: var(--teal); box-shadow: inset 0 0 0 4px #fff; color: #fff; }
.node-main { padding-left: 4px; gap: 30px; }
.node-main svg { width: 28px; height: 24px; }
.node-main span { font-family: "Open Sans", "Noto Sans CJK SC", sans-serif; white-space: nowrap; }
.dots { width: 20px; flex-direction: column; gap: 5px; }
.dots i { width: 5px; height: 5px; background: #fff; }
.helper { position: absolute; right: 0; bottom: 0; width: 80px; height: 80px; border-radius: 50%; background: var(--teal); box-shadow: 0 0 20px rgba(20, 30, 60, .25); }
.helper svg { width: 40px; height: 36px; }
```
